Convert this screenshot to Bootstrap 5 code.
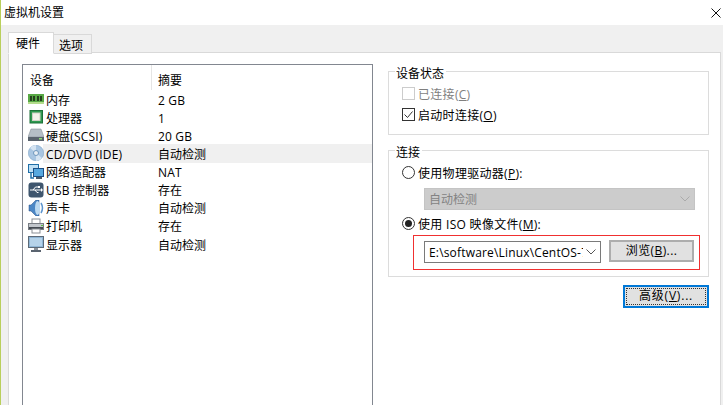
<!DOCTYPE html>
<html lang="zh"><head><meta charset="utf-8">
<link href="https://cdn.jsdelivr.net/npm/bootstrap@5.3.0/dist/css/bootstrap.min.css" rel="stylesheet">
<style>
html,body{margin:0;height:405px;overflow:hidden;background:#f0f0f0}
body{font:12px/16px "Open Sans","Noto Sans CJK SC",sans-serif;color:#000}
.win{width:723px;height:405px;border-left:1px solid #b9cf5c;display:flex;flex-direction:column;overflow:hidden}
.ttl{height:25px;flex:none;background:#fff;padding:5px 2px 0 3px}
.ttl svg{display:block;margin-top:3px}
.body-wrap{flex:1;padding:7px 2px 0 7px;min-height:0;display:flex;flex-direction:column}
.nav-tabs.vt{border:0;height:21px;flex:none;align-items:flex-end;margin-bottom:-1px;position:relative;z-index:1}
.vt .nav-link{border:1px solid #d9d9d9;border-radius:0;color:#000;background:#f0f0f0;height:20px;padding:3px 0 0 5px;margin:0 0 0 -1px;line-height:16px;white-space:nowrap;width:39px}
.vt .nav-item:first-child .nav-link{margin-left:0}
.vt .nav-link.active{height:22px;width:46px;padding:3px 0 0 7px;background:#fff;border-color:#d9d9d9 #d9d9d9 #fff;color:#000;position:relative;z-index:2}
.pane{flex:1;background:#fff;border:1px solid #d9d9d9;border-bottom:0;padding:11px 0 0 13px;display:flex;gap:15px;min-height:0}
.dev{width:351px;flex:none;border:1px solid #828790;border-bottom:0}
.dev-h{height:25px;display:flex;align-items:center}
.c1{width:129px;padding-left:7px;height:100%;line-height:31px;border-right:1px solid #e5e5e5;flex:none}
.c2{padding-left:6px;line-height:31px;height:100%}
.dev-r{height:18.13px;display:flex;align-items:center;line-height:18px}
.dev-r svg{flex:none;margin-left:5px;width:16px;height:16px;position:relative;z-index:1}
.nm{width:108px;height:100%;padding-top:1.500px;flex:none;padding-left:2px;white-space:nowrap}
.lat{letter-spacing:.17px}
.vl{padding:1.500px 0 0 6px;flex:1;height:100%}
.sel .nm,.sel .vl{background:#f0f0f0}
.sel .nm{margin-left:-1px;padding-left:3px;width:109px}
.side{width:321px;flex:none;padding-top:7px}
.grp{border:1px solid #dcdcdc;padding:0 0 0 13px}
.g1{height:64px;margin-bottom:15px}
.g2{height:127px}
.grp-t{display:block;width:fit-content;background:#fff;margin:-6px 0 0 -7px;padding:0 2px 0 1px;height:16px}
.opt{display:flex;align-items:center;gap:3px;height:16px}
.opt svg{flex:none}
.opt span{margin-top:3px;letter-spacing:.3px}
.opt1{margin-top:3px}
.opt2{margin-top:5px}
.off,.off u{color:#7f7f7f}
.form-select.fs{border-radius:0;font:inherit;font-size:12px;line-height:16px;height:22px;padding:1px 17px 0 4px;color:#000;border:1px solid #7a7a7a;box-shadow:none;background-position:right 4px center;background-size:10px 6px;background-color:#fff;background-image:url("data:image/svg+xml,%3csvg xmlns='http://www.w3.org/2000/svg' viewBox='0 0 10 6'%3e%3cpath fill='none' stroke='%23555' d='M.5.5l4.500 4.500 4.500-4.500'/%3e%3c/svg%3e")}
.form-select.fs:disabled{background-color:#ccc;border-color:#c4c4c4;color:#838383;margin:8px 0 0 22px;width:271px;background-image:url("data:image/svg+xml,%3csvg xmlns='http://www.w3.org/2000/svg' viewBox='0 0 10 6'%3e%3cpath fill='none' stroke='%23aaa' d='M.5.5l4.500 4.500 4.500-4.500'/%3e%3c/svg%3e")}
.pick{margin:4px 0 0 11px;width:287px;height:35px;padding:6px 6px 0 11px;display:flex;gap:8px;align-items:flex-start;box-shadow:inset 0 0 0 1px #f03030}
.pick .fs{width:177px;flex:none;letter-spacing:.17px}
.btn.wb{border-radius:0;border:2px solid #adadad;background:#e1e1e1;color:#000;font-size:12px;line-height:16px;padding:0;width:85px;height:22px;flex:none;margin-top:-1px;letter-spacing:.4px}
.btn.adv{border-color:#0078d7;display:block;margin:8px 0 0 235px;width:86px;height:23px;letter-spacing:.8px}
.btn.adv i{display:block;margin:1px;height:17px;outline:1px dotted #333;outline-offset:-1px;font-style:normal}
</style></head><body>
<div class="win">
 <div class="ttl d-flex justify-content-between"><span>虚拟机设置</span>
  <svg width="10" height="10" viewBox="0 0 10 10"><path d="M.5.5l9 9M9.500.5l-9 9" stroke="#111" fill="none"/></svg></div>
 <div class="body-wrap">
  <ul class="nav nav-tabs vt"><li class="nav-item"><a class="nav-link active">硬件</a></li><li class="nav-item"><a class="nav-link">选项</a></li></ul>
  <div class="pane">
   <div class="dev">
    <div class="dev-h"><div class="c1">设备</div><div class="c2">摘要</div></div>
    <div class="dev-r"><svg viewBox="0 0 16 16"><rect y="3" width="16" height="9" fill="#58a845"/><rect y="11" width="16" height="2" fill="#b4dc8c"/><path d="M2 5h2v5H2zM5 5h2v5H5zM9 5h2v5H9zM12 5h2v5h-2z" fill="#26401e"/></svg><span class="nm">内存</span><span class="vl lat">2 GB</span></div>
    <div class="dev-r"><svg viewBox="0 0 16 16"><rect x="2" y="1.500" width="12.500" height="12.500" fill="#2f9a50" stroke="#1c7038"/><rect x="4.500" y="4" width="7.500" height="7.500" fill="#f2f2ea" stroke="#cfcfc4"/></svg><span class="nm">处理器</span><span class="vl">1</span></div>
    <div class="dev-r"><svg viewBox="0 0 16 16"><path d="M3 2h10l3 8H0z" fill="#b5bec6" stroke="#8a929b" stroke-width=".6"/><rect y="10" width="16" height="4" fill="#59636d"/><rect x="11" y="11" width="3" height="1.500" fill="#8fdc7a"/></svg><span class="nm lat">硬盘(SCSI)</span><span class="vl lat">20 GB</span></div>
    <div class="dev-r sel"><svg viewBox="0 0 16 16"><circle cx="8" cy="8" r="7.700" fill="#a9c6e2" stroke="#7fa6c9" stroke-width=".6"/><path d="M8 8L2 3a8 8 0 0 1 6-3zM8 8l6 5a8 8 0 0 1-6 3z" fill="#d5e4f2"/><circle cx="8" cy="8" r="2.500" fill="#e8eef4" stroke="#6e97bd"/></svg><span class="nm lat">CD/DVD (IDE)</span><span class="vl">自动检测</span></div>
    <div class="dev-r"><svg viewBox="0 0 16 16"><rect x=".5" y=".5" width="10" height="8" fill="#bfe0f5" stroke="#1f6fa8"/><path d="M3 9v5h3" stroke="#1f6fa8" fill="none" stroke-width="1.500"/><rect x="5.500" y="4.500" width="10" height="8" fill="#57a8df" stroke="#1c4f86"/><rect x="8" y="13" width="6" height="2" fill="#4a5a6a"/></svg><span class="nm">网络适配器</span><span class="vl lat">NAT</span></div>
    <div class="dev-r"><svg viewBox="0 0 16 16"><rect x=".5" y=".5" width="15" height="15" rx="3" fill="#3f566e"/><path d="M2 8h11M5 8l2.500-3H10M7 8l2 2.500h1.500" stroke="#fff" fill="none"/><path d="M13 6v4l2-2z" fill="#fff"/><rect x="10" y="4" width="2" height="2" fill="#fff"/></svg><span class="nm lat">USB 控制器</span><span class="vl">存在</span></div>
    <div class="dev-r"><svg viewBox="0 0 16 16"><path d="M1 5h2l5-5h3v16H8l-5-5H1z" fill="#4c87c5" stroke="#274f84" stroke-width=".5"/><ellipse cx="9.500" cy="8" rx="2.500" ry="7" fill="#bcd9f0"/><path d="M13 3q3 5 0 10" stroke="#5d95cf" stroke-width="1.500" fill="none"/></svg><span class="nm">声卡</span><span class="vl">自动检测</span></div>
    <div class="dev-r"><svg viewBox="0 0 16 16"><rect x="4" y="1" width="8" height="5" fill="#fff" stroke="#8a8f96"/><rect x=".5" y="5.500" width="15" height="6" fill="#c1c6cc" stroke="#777c83"/><rect x="1" y="9" width="14" height="2" fill="#444a52"/><rect x="4" y="11" width="8" height="4" fill="#fff" stroke="#8a8f96"/><rect x="13" y="7" width="2" height="1" fill="#58c040"/></svg><span class="nm">打印机</span><span class="vl">存在</span></div>
    <div class="dev-r"><svg viewBox="0 0 16 16"><rect x=".5" y=".5" width="15" height="11" fill="#8fb6d6" stroke="#5c6a78"/><rect x="2" y="2" width="12" height="8" fill="#b5d3ea"/><rect x="6" y="12" width="4" height="2" fill="#8a929b"/><rect x="3" y="14" width="10" height="2" fill="#5a6470"/></svg><span class="nm">显示器</span><span class="vl">自动检测</span></div>
   </div>
   <div class="side">
    <div class="grp g1"><span class="grp-t">设备状态</span>
     <div class="opt off opt1"><svg width="13" height="13"><rect x=".5" y=".5" width="12" height="12" fill="#fff" stroke="#ccc"/></svg><span>已连接(<u>C</u>)</span></div>
     <div class="opt opt2"><svg width="13" height="13"><rect x=".5" y=".5" width="12" height="12" fill="#fff" stroke="#333"/><path d="M2.500 6.500l3 3 5-6" stroke="#333" fill="none"/></svg><span>启动时连接(<u>O</u>)</span></div>
    </div>
    <div class="grp g2"><span class="grp-t">连接</span>
     <div class="opt opt1"><svg width="13" height="13"><circle cx="6.500" cy="6.500" r="6" fill="#fff" stroke="#333"/></svg><span>使用物理驱动器(<u>P</u>):</span></div>
     <select class="form-select fs" disabled><option>自动检测</option></select>
     <div class="opt opt2"><svg width="13" height="13"><circle cx="6.500" cy="6.500" r="6" fill="#fff" stroke="#333"/><circle cx="6.500" cy="6.500" r="3.500" fill="#222"/></svg><span>使用 ISO 映像文件(<u>M</u>):</span></div>
     <div class="pick"><select class="form-select fs"><option>E:\software\Linux\CentOS-7-x86_64-DVD.iso</option></select><button class="btn wb" type="button">浏览(<u>B</u>)...</button></div>
    </div>
    <button class="btn wb adv" type="button"><i>高级(<u>V</u>)...</i></button>
   </div>
  </div>
 </div>
</div>
</body></html>
